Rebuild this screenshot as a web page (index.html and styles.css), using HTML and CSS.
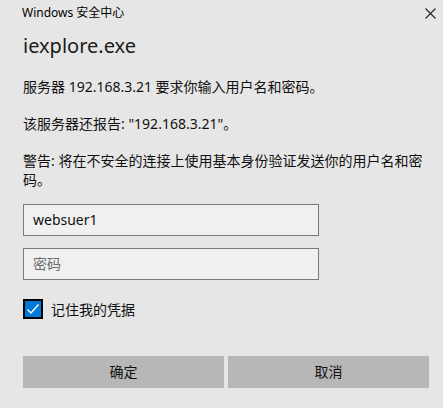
FILE: index.html
```html
<!DOCTYPE html>
<html lang="zh-CN">
<head>
<meta charset="utf-8">
<title>Windows 安全中心</title>
<link rel="stylesheet" href="styles.css">
</head>
<body>
<div class="dialog">
  <div class="titlebar">
    <span class="title">Windows 安全中心</span>
    <span class="close">
      <svg width="11" height="11" viewBox="0 0 11 11"><path d="M0.5 0.5 L10.5 10.5 M10.5 0.5 L0.5 10.5" stroke="#222" stroke-width="1.1" fill="none"/></svg>
    </span>
  </div>
  <h1 class="app">iexplore.exe</h1>
  <p class="msg msg-first">服务器 192.168.3.21 要求你输入用户名和密码。</p>
  <p class="msg">该服务器还报告: "192.168.3.21"。</p>
  <p class="msg">警告: 将在不安全的连接上使用基本身份验证发送你的用户名和密码。</p>
  <div class="field field-user">websuer1</div>
  <div class="field field-pass placeholder">密码</div>
  <label class="remember">
    <span class="checkbox">
      <svg width="16" height="16" viewBox="0 0 16 16"><path d="M2.5 8.5 L6 12 L13.5 3.5" stroke="#fff" stroke-width="1.4" fill="none"/></svg>
    </span>
    <span class="remember-text">记住我的凭据</span>
  </label>
  <div class="buttons">
    <div class="btn">确定</div>
    <div class="btn">取消</div>
  </div>
</div>
</body>
</html>
```
FILE: styles.css
```css
html, body {
  margin: 0;
  padding: 0;
  background: #e6e6e6;
}
body {
  font-family: "Segoe UI", "Noto Sans", "Noto Sans CJK SC", sans-serif;
  color: #000;
  width: 443px;
  height: 408px;
  overflow: hidden;
}
.dialog {
  padding: 0 14px 0 23px;
}
.titlebar {
  height: 26px;
  display: flex;
  align-items: center;
  justify-content: space-between;
  margin-left: -1px;
  margin-right: -7px;
}
.title {
  font-size: 12px;
  line-height: 26px;
  color: #000;
}
.close {
  display: flex;
  width: 11px;
  height: 11px;
}
.app {
  font-size: 20px;
  font-weight: normal;
  line-height: 28px;
  margin: 6px 0 0 0;
  color: #1a1a1a;
}
.msg {
  font-size: 14px;
  line-height: 19px;
  margin: 18px 0 0 0;
  color: #111;
}
.msg-first {
  margin-top: 17px;
}
.field {
  width: 294px;
  height: 30px;
  border: 1px solid #7a7a7a;
  background: #f0f0f0;
  box-sizing: content-box;
  font-size: 14px;
  line-height: 30px;
  padding: 0 0 0 9px;
  width: 285px;
  color: #111;
}
.field-user {
  margin-top: 15px;
}
.field-pass {
  margin-top: 12px;
}
.placeholder {
  color: #6b6b6b;
}
.remember {
  display: flex;
  align-items: center;
  margin-top: 19px;
  height: 20px;
}
.checkbox {
  width: 16px;
  height: 16px;
  border: 2px solid #000;
  background: #0078d7;
  display: flex;
}
.remember-text {
  margin-left: 8px;
  font-size: 14px;
  color: #111;
}
.buttons {
  display: flex;
  gap: 4px;
  margin-top: 37px;
}
.btn {
  flex: 1;
  height: 32px;
  background: #b7b7b7;
  font-size: 14px;
  line-height: 32px;
  text-align: center;
  color: #111;
}
```
